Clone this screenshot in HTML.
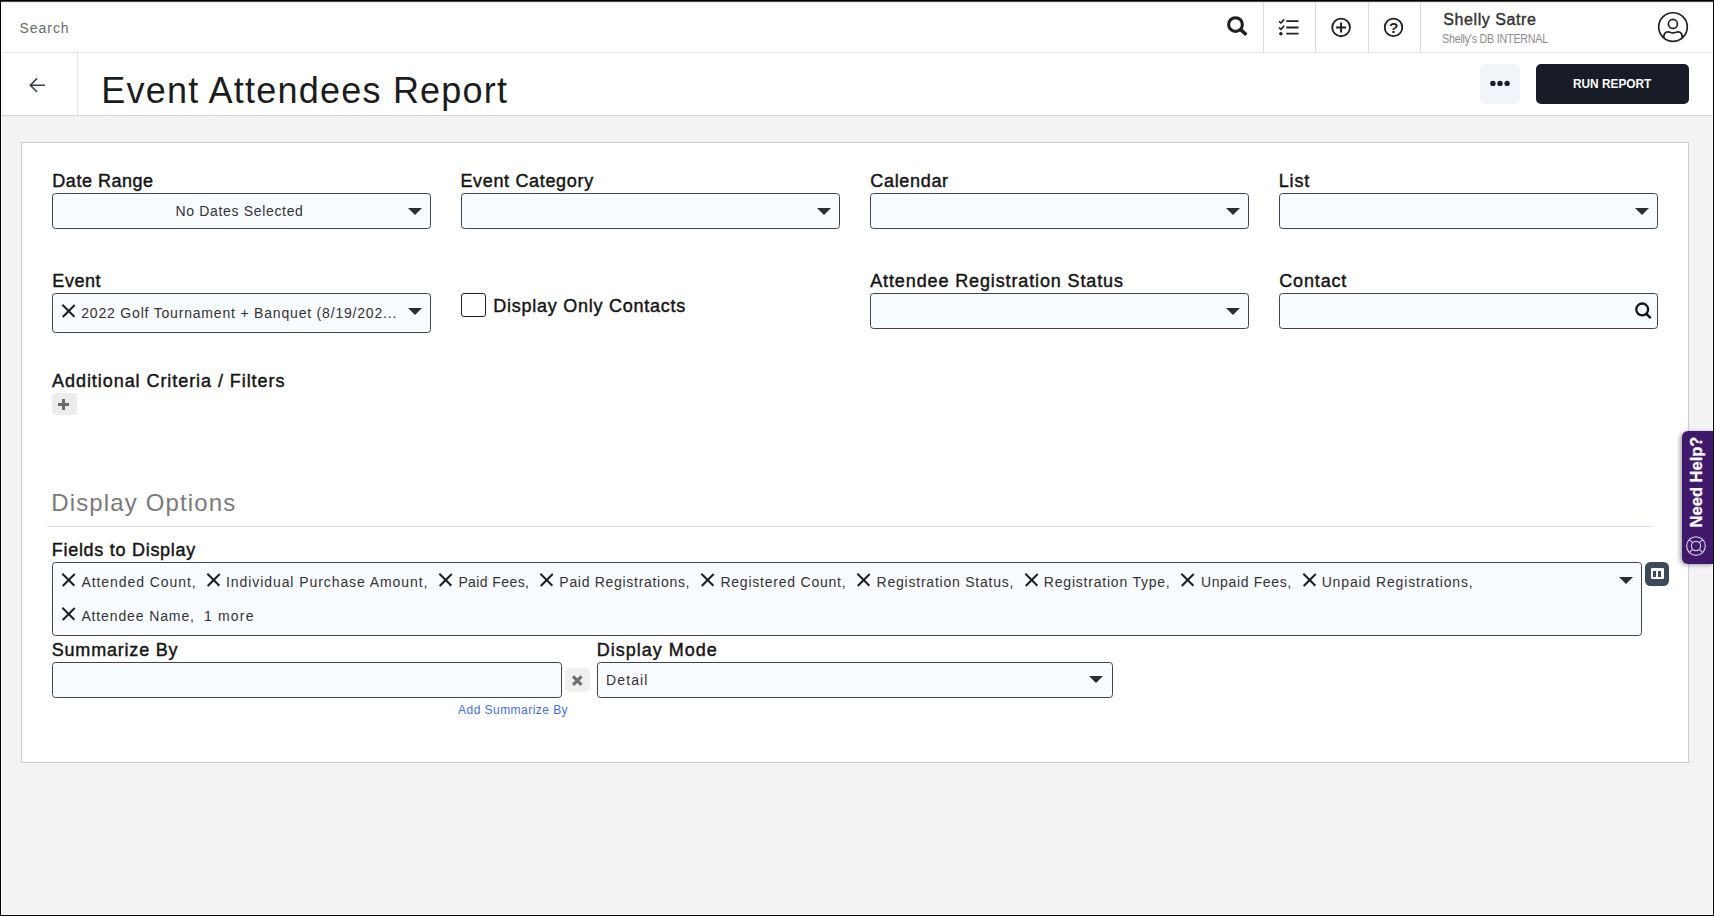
<!DOCTYPE html>
<html lang="en">
<head>
<meta charset="utf-8">
<title>Event Attendees Report</title>
<style>
*{box-sizing:border-box;margin:0;padding:0}
html,body{width:1714px;height:916px;overflow:hidden;background:#f3f3f3;font-family:"Liberation Sans",sans-serif}
#frame{position:absolute;left:0;top:0;width:1714px;height:916px;overflow:hidden;background:#f3f3f3}
.abs{position:absolute}
.t{position:absolute;white-space:nowrap;display:block}
#topbar{left:1px;top:2px;width:1711px;height:50px;background:#fff}
#topline{left:1px;top:52px;width:1711px;height:1px;background:#e4e4e4}
#titlebar{left:1px;top:53px;width:1711px;height:62px;background:#fff}
#titleline{left:1px;top:115px;width:1711px;height:1px;background:#d6d6d6}
.vsep{position:absolute;top:2px;width:1px;height:50px;background:#dcdcdc}
#backsep{left:77px;top:53px;width:1px;height:62px;background:#e6e6e6;position:absolute}
#panel{left:21px;top:142px;width:1668px;height:621px;background:#fff;border:1px solid #cfcfcf}
.box{position:absolute;height:36px;background:#f8fbff;border:1px solid #3f4454;border-radius:3.500px}
.arr{position:absolute;width:0;height:0;border-left:7px solid transparent;border-right:7px solid transparent;border-top:7px solid #2a2c36}
.x{position:absolute;width:13px;height:13px}
.x::before,.x::after{content:"";position:absolute;left:-2.2px;top:5.75px;width:17.4px;height:1.5px;background:#1e1e1e;transform:rotate(45deg)}
.x::after{transform:rotate(-45deg)}
#bt{left:0;top:0;width:1714px;height:1px;background:#000}
#bt2{left:0;top:1px;width:1714px;height:1px;background:#484848}
#bt3{left:1px;top:2px;width:1712px;height:1px;background:rgba(0,0,0,.075)}
#bl{left:0;top:0;width:1px;height:916px;background:#000}
#br{left:1713px;top:0;width:1px;height:916px;background:#000}
#bb{left:0;top:915px;width:1714px;height:1px;background:#000}
#wr{left:1712px;top:2px;width:1px;height:913px;background:#fff}
#wb{left:1px;top:914px;width:1712px;height:1px;background:#fff}
#wl{left:1px;top:2px;width:1px;height:913px;background:#fff}
</style>
</head>
<body>
<div id="frame">
<div class="abs" id="topbar"></div>
<div class="abs" id="topline"></div>
<div class="abs" id="titlebar"></div>
<div class="abs" id="titleline"></div>
<div id="backsep"></div>
<div class="vsep" style="left:1263px"></div>
<div class="vsep" style="left:1315px"></div>
<div class="vsep" style="left:1368px"></div>
<div class="vsep" style="left:1420px"></div>

<!-- header icons -->
<svg class="abs" style="left:1226px;top:15px" width="23" height="23" viewBox="0 0 23 23"><circle cx="9.500" cy="9.550" r="6.850" fill="none" stroke="#1f1f24" stroke-width="3.100"/><path d="M14.100 14.100L20.300 19.700" stroke="#1f1f24" stroke-width="3.500" stroke-linecap="butt"/></svg>
<svg class="abs" style="left:1277px;top:17px" width="24" height="20" viewBox="0 0 24 20"><g fill="none" stroke="#1f1f24" stroke-linejoin="miter"><path d="M9.300 4.100H21.500M9.300 10.500H21.500M9.300 16.700H21.500" stroke-width="1.800" stroke-linecap="butt"/><path d="M2 4.300L3.900 6L7.200 2.400M2 10.600L3.900 12.300L7.200 8.700" stroke-width="1.600"/></g><circle cx="3.900" cy="16.700" r="1.800" fill="#1f1f24"/></svg>
<svg class="abs" style="left:1330px;top:17px" width="22" height="22" viewBox="0 0 22 22"><circle cx="11.100" cy="10.400" r="8.850" fill="none" stroke="#1f1f24" stroke-width="1.850"/><path d="M11.100 5.400V15.400M6.100 10.400H16.100" stroke="#1f1f24" stroke-width="2"/></svg>
<svg class="abs" style="left:1383px;top:17px" width="22" height="22" viewBox="0 0 22 22"><circle cx="10.500" cy="10.400" r="8.750" fill="none" stroke="#1f1f24" stroke-width="1.850"/><text x="10.800" y="16.400" text-anchor="middle" font-family="Liberation Sans, sans-serif" font-weight="bold" font-size="15.500" fill="#1f1f24">?</text></svg>
<svg class="abs" style="left:1656px;top:10px" width="34" height="34" viewBox="0 0 34 34"><g fill="none" stroke="#1f1f24" stroke-width="1.650"><circle cx="17" cy="17" r="14.300"/><circle cx="16.900" cy="13.900" r="4.500"/><path d="M7.700 27.900C7.700 24.300 9.400 21.900 12 21.900C13.600 21.900 14.600 22.900 17 22.900C19.400 22.900 20.400 21.900 22 21.900C24.600 21.900 26.300 24.300 26.300 27.900"/></g></svg>

<!-- back arrow -->
<svg class="abs" style="left:28px;top:76px" width="19" height="18" viewBox="0 0 19 18"><path d="M16.900 9.200H2.300M9.100 2.400L2.300 9.200L9.100 16" fill="none" stroke="#39404d" stroke-width="1.600"/></svg>

<!-- title bar buttons -->
<div class="abs" style="left:1480px;top:64px;width:40px;height:40px;background:#f1f5f9;border-radius:5px"></div>
<svg class="abs" style="left:1488px;top:78px" width="24" height="11" viewBox="0 0 24 11"><circle cx="4.900" cy="5.400" r="2.700" fill="#1c1c24"/><circle cx="12" cy="5.400" r="2.700" fill="#1c1c24"/><circle cx="19.100" cy="5.400" r="2.700" fill="#1c1c24"/></svg>
<div class="abs" style="left:1536px;top:64px;width:153px;height:40px;background:#171c27;border-radius:5px"></div>

<!-- panel -->
<div class="abs" id="panel"></div>

<!-- row 1 boxes -->
<div class="box" style="left:52px;top:193px;width:379px"></div><div class="arr" style="left:408px;top:208px"></div>
<div class="box" style="left:461px;top:193px;width:379px"></div><div class="arr" style="left:817px;top:208px"></div>
<div class="box" style="left:870px;top:193px;width:379px"></div><div class="arr" style="left:1226px;top:208px"></div>
<div class="box" style="left:1279px;top:193px;width:379px"></div><div class="arr" style="left:1635px;top:208px"></div>
<!-- row 2 -->
<div class="box" style="left:52px;top:293px;width:379px;height:40px"></div><div class="arr" style="left:408px;top:308px"></div>
<div class="x" style="left:61.700px;top:304.200px"></div>
<div class="abs" style="left:461px;top:293px;width:25px;height:24px;background:#fff;border:1px solid #222;border-radius:3px"></div>
<div class="box" style="left:870px;top:293px;width:379px"></div><div class="arr" style="left:1226px;top:308px"></div>
<div class="box" style="left:1279px;top:293px;width:379px"></div>
<svg class="abs" style="left:1633px;top:301px" width="20" height="20" viewBox="0 0 20 20"><circle cx="9.200" cy="8.400" r="5.900" fill="none" stroke="#15151a" stroke-width="2.300"/><path d="M13.400 12.800 L17.700 17.100" stroke="#15151a" stroke-width="2.500" stroke-linecap="butt"/></svg>

<!-- plus button -->
<div class="abs" style="left:52px;top:393px;width:25px;height:22px;background:#ececec;border-radius:4px"></div>
<div class="abs" style="left:58px;top:403.100px;width:11px;height:2.600px;background:#6a6a6a"></div>
<div class="abs" style="left:62.200px;top:398.900px;width:2.600px;height:11px;background:#6a6a6a"></div>

<!-- display options line -->
<div class="abs" style="left:47px;top:526px;width:1606px;height:1px;background:#dcdcf2"></div>

<!-- fields box -->
<div class="box" style="left:52px;top:562px;width:1590px;height:74px"></div><div class="arr" style="left:1619px;top:577px"></div>
<div class="x" style="left:61.700px;top:573.500px"></div>
<div class="x" style="left:207px;top:573.500px"></div>
<div class="x" style="left:439px;top:573.500px"></div>
<div class="x" style="left:540.600px;top:573.500px"></div>
<div class="x" style="left:701.500px;top:573.500px"></div>
<div class="x" style="left:857.300px;top:573.500px"></div>
<div class="x" style="left:1024.700px;top:573.500px"></div>
<div class="x" style="left:1181.600px;top:573.500px"></div>
<div class="x" style="left:1303px;top:573.500px"></div>
<div class="x" style="left:61.700px;top:607.500px"></div>
<!-- columns button -->
<div class="abs" style="left:1645px;top:562px;width:24px;height:24px;background:#3d4a5b;border-radius:5.500px"></div>
<div class="abs" style="left:1650.500px;top:568px;width:13px;height:11px;background:#fff;border-radius:1px"></div>
<div class="abs" style="left:1652.900px;top:571.200px;width:3.200px;height:5.600px;background:#3d4a5b"></div>
<div class="abs" style="left:1658.200px;top:571.200px;width:3.200px;height:5.600px;background:#3d4a5b"></div>

<!-- summarize row -->
<div class="box" style="left:52px;top:662px;width:510px"></div>
<div class="abs" style="left:565px;top:668px;width:25px;height:24px;background:#efefef;border-radius:5px"></div>
<svg class="abs" style="left:571px;top:673.500px" width="13" height="13" viewBox="0 0 13 13"><path d="M2.100 2.400L10.500 10.800M10.500 2.400L2.100 10.800" stroke="#707070" stroke-width="3.100"/></svg>
<div class="box" style="left:597px;top:662px;width:516px"></div><div class="arr" style="left:1089px;top:676px"></div>

<span class="t" id="t_search" style="left:19.53px;top:21.25px;font-size:14px;line-height:14px;letter-spacing:0.953px;color:#6b6b6b;">Search</span>
<span class="t" id="t_title" style="left:101.23px;top:72.53px;font-size:36px;line-height:36px;letter-spacing:1.218px;color:#1c1c1c;">Event Attendees Report</span>
<span class="t" id="t_name" style="left:1443.36px;top:12.36px;font-size:16px;line-height:16px;letter-spacing:0.570px;color:#333;-webkit-text-stroke:0.4px #333;">Shelly Satre</span>
<span class="t" id="t_db" style="left:1442.19px;top:32.94px;font-size:12px;line-height:12px;letter-spacing:-0.250px;color:#8c8c8c;transform:scaleX(0.8934);transform-origin:0 0;">Shelly's DB INTERNAL</span>
<span class="t" id="t_run" style="left:1572.90px;top:77.30px;font-size:13px;line-height:13px;letter-spacing:0.000px;color:#fff;font-weight:bold;transform:scaleX(0.9115);transform-origin:0 0;">RUN REPORT</span>
<span class="t" id="l_date" style="left:52.35px;top:171.86px;font-size:18px;line-height:18px;letter-spacing:0.511px;color:#141414;-webkit-text-stroke:0.42px #141414;">Date Range</span>
<span class="t" id="l_evcat" style="left:460.38px;top:171.86px;font-size:18px;line-height:18px;letter-spacing:0.669px;color:#141414;-webkit-text-stroke:0.42px #141414;">Event Category</span>
<span class="t" id="l_cal" style="left:870.25px;top:171.86px;font-size:18px;line-height:18px;letter-spacing:0.685px;color:#141414;-webkit-text-stroke:0.42px #141414;">Calendar</span>
<span class="t" id="l_list" style="left:1278.80px;top:171.86px;font-size:18px;line-height:18px;letter-spacing:0.799px;color:#141414;-webkit-text-stroke:0.42px #141414;">List</span>
<span class="t" id="l_event" style="left:52.35px;top:271.86px;font-size:18px;line-height:18px;letter-spacing:0.540px;color:#141414;-webkit-text-stroke:0.42px #141414;">Event</span>
<span class="t" id="l_ars" style="left:870.24px;top:271.86px;font-size:18px;line-height:18px;letter-spacing:0.874px;color:#141414;-webkit-text-stroke:0.42px #141414;">Attendee Registration Status</span>
<span class="t" id="l_contact" style="left:1279.25px;top:271.86px;font-size:18px;line-height:18px;letter-spacing:0.848px;color:#141414;-webkit-text-stroke:0.42px #141414;">Contact</span>
<span class="t" id="l_doc" style="left:493.27px;top:296.66px;font-size:18px;line-height:18px;letter-spacing:0.749px;color:#141414;-webkit-text-stroke:0.42px #141414;">Display Only Contacts</span>
<span class="t" id="l_acf" style="left:52.10px;top:372.06px;font-size:18px;line-height:18px;letter-spacing:0.938px;color:#141414;-webkit-text-stroke:0.42px #141414;">Additional Criteria / Filters</span>
<span class="t" id="l_ftd" style="left:51.74px;top:540.66px;font-size:18px;line-height:18px;letter-spacing:0.720px;color:#141414;-webkit-text-stroke:0.42px #141414;">Fields to Display</span>
<span class="t" id="l_sum" style="left:51.69px;top:640.86px;font-size:18px;line-height:18px;letter-spacing:0.809px;color:#141414;-webkit-text-stroke:0.42px #141414;">Summarize By</span>
<span class="t" id="l_dm" style="left:596.77px;top:640.86px;font-size:18px;line-height:18px;letter-spacing:0.988px;color:#141414;-webkit-text-stroke:0.42px #141414;">Display Mode</span>
<span class="t" id="t_dopt" style="left:51.33px;top:490.78px;font-size:24px;line-height:24px;letter-spacing:1.124px;color:#7a7a7a;">Display Options</span>
<span class="t" id="t_nodates" style="left:175.57px;top:203.95px;font-size:14px;line-height:14px;letter-spacing:0.661px;color:#333;">No Dates Selected</span>
<span class="t" id="t_evval" style="left:81.28px;top:305.95px;font-size:14px;line-height:14px;letter-spacing:0.809px;color:#333;">2022 Golf Tournament + Banquet (8/19/202...</span>
<span class="t" id="f1" style="left:81.38px;top:575.15px;font-size:14px;line-height:14px;letter-spacing:0.936px;color:#333;">Attended Count,</span>
<span class="t" id="f2" style="left:226.03px;top:575.15px;font-size:14px;line-height:14px;letter-spacing:0.923px;color:#333;">Individual Purchase Amount,</span>
<span class="t" id="f3" style="left:458.39px;top:575.15px;font-size:14px;line-height:14px;letter-spacing:0.403px;color:#333;">Paid Fees,</span>
<span class="t" id="f4" style="left:559.35px;top:575.15px;font-size:14px;line-height:14px;letter-spacing:0.702px;color:#333;">Paid Registrations,</span>
<span class="t" id="f5" style="left:720.39px;top:575.15px;font-size:14px;line-height:14px;letter-spacing:0.778px;color:#333;">Registered Count,</span>
<span class="t" id="f6" style="left:876.57px;top:575.15px;font-size:14px;line-height:14px;letter-spacing:0.775px;color:#333;">Registration Status,</span>
<span class="t" id="f7" style="left:1043.87px;top:575.15px;font-size:14px;line-height:14px;letter-spacing:0.783px;color:#333;">Registration Type,</span>
<span class="t" id="f8" style="left:1200.95px;top:575.15px;font-size:14px;line-height:14px;letter-spacing:0.638px;color:#333;">Unpaid Fees,</span>
<span class="t" id="f9" style="left:1321.63px;top:575.15px;font-size:14px;line-height:14px;letter-spacing:0.861px;color:#333;">Unpaid Registrations,</span>
<span class="t" id="f10" style="left:81.38px;top:609.15px;font-size:14px;line-height:14px;letter-spacing:0.877px;color:#333;">Attendee Name,</span>
<span class="t" id="f11" style="left:203.95px;top:609.15px;font-size:14px;line-height:14px;letter-spacing:1.194px;color:#333;">1 more</span>
<span class="t" id="t_detail" style="left:605.99px;top:673.35px;font-size:14px;line-height:14px;letter-spacing:1.132px;color:#333;">Detail</span>
<span class="t" id="t_addsum" style="left:458.05px;top:703.74px;font-size:12px;line-height:12px;letter-spacing:0.456px;color:#3f6df5;">Add Summarize By</span>

<!-- frame borders -->
<div class="abs" id="wr"></div><div class="abs" id="wb"></div><div class="abs" id="wl"></div>
<!-- need help tab -->
<div class="abs" id="help" style="left:1682px;top:431px;width:32px;height:133px;background:#41196c;border-radius:6px 0 0 6px;box-shadow:-2px 1px 4px rgba(0,0,0,.35)"></div>
<div class="abs" id="helptxt" style="left:1682px;top:431px;width:31px;height:133px"><span style="position:absolute;left:14.400px;top:69px;transform:translate(-50%,-50%) rotate(-90deg);white-space:nowrap;font-size:16.500px;font-weight:bold;color:#fff;-webkit-text-stroke:0.25px #fff;display:block;padding-left:36px">Need Help?</span></div>
<svg class="abs" style="left:1683.900px;top:534px" width="24" height="24" viewBox="0 0 24 24"><g fill="none" stroke="#d9cfe6" stroke-width="1.150"><circle cx="12" cy="12" r="9.300"/><circle cx="12" cy="12" r="4.600"/><path d="M5.400 5.400l3.400 3.400M18.600 5.400l-3.400 3.400M5.400 18.600l3.400-3.400M18.600 18.600l-3.400-3.400"/></g></svg>


<div class="abs" id="bt3"></div><div class="abs" id="bt2"></div><div class="abs" id="bt"></div><div class="abs" id="bl"></div><div class="abs" id="br"></div><div class="abs" id="bb"></div>
</div>
</body>
</html>
